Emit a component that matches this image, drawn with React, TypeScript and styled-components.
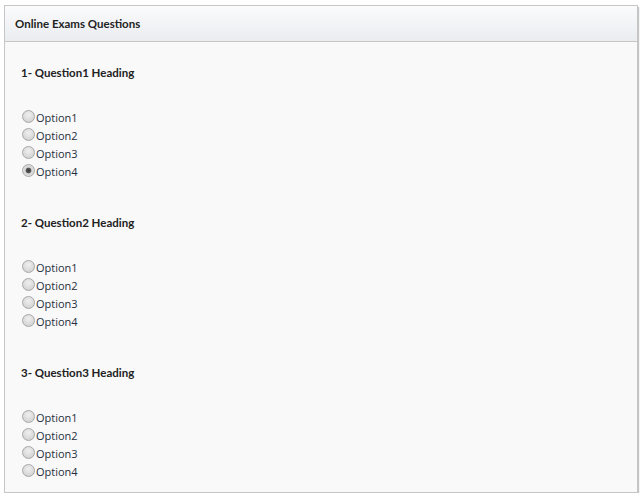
import styled, { createGlobalStyle } from "styled-components";

const GlobalStyle = createGlobalStyle`
  html, body {
    margin: 0;
    padding: 0;
    background: #ffffff;
  }
  body {
    font-family: "Open Sans", "Noto Sans", Arial, sans-serif;
    color: #333;
  }
`;

const Page = styled.div`
  padding: 5px 4px 0 4px;
  width: 634px;
`;

const Panel = styled.div`
  border: 1px solid #c6c6c6;
  background: #f9f9f9;
  box-shadow: 1px 2px 1px #c4c4c4;
  height: 486px;
  display: flex;
  flex-direction: column;
  overflow: hidden;
`;

const PanelHeader = styled.div`
  flex-shrink: 0;
  height: 36px;
  box-sizing: border-box;
  padding: 0 10px;
  display: flex;
  align-items: center;
  background: linear-gradient(to bottom, #fbfbfc 0%, #eaecf0 100%);
  border-bottom: 1px solid #c6c6c6;
  font-family: Lato, "Open Sans", sans-serif;
  font-size: 11.5px;
  font-weight: bold;
  color: #222;
`;

const PanelBody = styled.div`
  padding: 23px 16px 0 16px;
  display: flex;
  flex-direction: column;
  gap: 34px;
`;

const Question = styled.div`
  display: flex;
  flex-direction: column;
`;

const Heading = styled.div`
  font-family: Lato, "Open Sans", sans-serif;
  font-size: 11.5px;
  font-weight: bold;
  color: #222;
  line-height: 16px;
  height: 16px;
  margin-bottom: 28px;
`;

const OptionRow = styled.label`
  display: flex;
  align-items: flex-start;
  height: 18px;
  font-size: 11px;
  line-height: 18px;
  color: #26303d;
`;

const Radio = styled.span<{ checked?: boolean }>`
  width: 11px;
  height: 11px;
  margin: 1px 1px 0 1px;
  border-radius: 50%;
  border: 1px solid #a8a8a8;
  box-sizing: content-box;
  background: ${(p) =>
    p.checked
      ? "radial-gradient(circle, #3e3e3e 0%, #555 30%, #d6d6d6 42%, #e4e4e4 100%)"
      : "radial-gradient(circle at 50% 35%, #efefef 0%, #d8d8d8 65%, #c6c6c6 100%)"};
  flex-shrink: 0;
`;

const questions = [
  { title: "1- Question1 Heading", checked: 3 },
  { title: "2- Question2 Heading", checked: -1 },
  { title: "3- Question3 Heading", checked: -1 },
];

const options = ["Option1", "Option2", "Option3", "Option4"];

function App() {
  return (
    <Page>
      <GlobalStyle />
      <Panel>
        <PanelHeader>Online Exams Questions</PanelHeader>
        <PanelBody>
          {questions.map((q) => (
            <Question key={q.title}>
              <Heading>{q.title}</Heading>
              {options.map((o, i) => (
                <OptionRow key={o}>
                  <Radio checked={i === q.checked} />
                  {o}
                </OptionRow>
              ))}
            </Question>
          ))}
        </PanelBody>
      </Panel>
    </Page>
  );
}

export default App;
